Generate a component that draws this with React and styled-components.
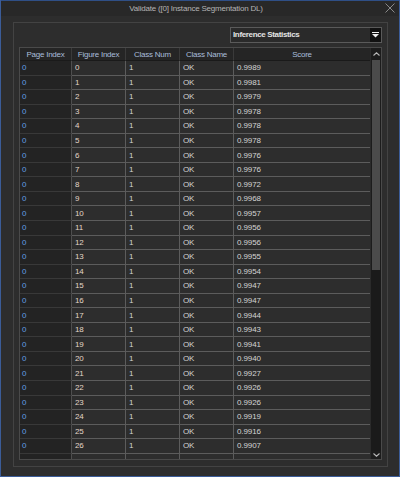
import React from 'react'
import styled, { createGlobalStyle } from 'styled-components'

const GlobalStyle = createGlobalStyle`
  html, body {
    margin: 0;
    padding: 0;
    background: #2d2d2d;
  }
  * { box-sizing: border-box; }
`

const scores = [
  '0.9989', '0.9981', '0.9979', '0.9978', '0.9978', '0.9978', '0.9976', '0.9976',
  '0.9972', '0.9968', '0.9957', '0.9956', '0.9956', '0.9955', '0.9954', '0.9947',
  '0.9947', '0.9944', '0.9943', '0.9941', '0.9940', '0.9927', '0.9926', '0.9926',
  '0.9919', '0.9916', '0.9907',
]

const App = () => {
  return (
    <Window>
      <GlobalStyle />
      <TitleBar>
        <Title>Validate ([0] Instance Segmentation DL)</Title>
        <Close>
          <svg width="10" height="10" viewBox="0 0 10 10">
            <path d="M0.5 0.5 L9.5 9.5 M9.5 0.5 L0.5 9.5" stroke="#8a8a8a" strokeWidth="1" />
          </svg>
        </Close>
      </TitleBar>
      <Body>
        <Frame>
          <Toolbar>
            <Select>
              <SelectText>Inference Statistics</SelectText>
              <SelectButton>
                <svg width="7" height="6" viewBox="0 0 7 6">
                  <rect x="0" y="0" width="7" height="1" fill="#f0f0f0" />
                  <path d="M0 2 L7 2 L3.5 5.5 Z" fill="#f0f0f0" />
                </svg>
              </SelectButton>
            </Select>
          </Toolbar>
          <TableBox>
            <Grid>
              <HeadCell>Page Index</HeadCell>
              <HeadCell>Figure Index</HeadCell>
              <HeadCell>Class Num</HeadCell>
              <HeadCell>Class Name</HeadCell>
              <HeadCell $last>Score</HeadCell>
              {scores.map((s, i) => (
                <React.Fragment key={i}>
                  <RowHead>0</RowHead>
                  <Cell $figure>{i}</Cell>
                  <Cell>1</Cell>
                  <Cell>OK</Cell>
                  <Cell $last>{s}</Cell>
                </React.Fragment>
              ))}
              <RowHead />
              <Cell />
              <Cell />
              <Cell />
              <Cell $last />
            </Grid>
            <ScrollBar>
              <ScrollArrow>
                <svg width="7" height="4" viewBox="0 0 7 4">
                  <path d="M0.5 3.5 L3.5 0.8 L6.5 3.5" stroke="#b8b8b8" strokeWidth="1.1" fill="none" />
                </svg>
              </ScrollArrow>
              <Thumb />
              <Track />
              <ScrollArrow $down>
                <svg width="7" height="4" viewBox="0 0 7 4">
                  <path d="M0.5 0.5 L3.5 3.2 L6.5 0.5" stroke="#b8b8b8" strokeWidth="1.1" fill="none" />
                </svg>
              </ScrollArrow>
            </ScrollBar>
          </TableBox>
        </Frame>
      </Body>
    </Window>
  )
}

const Window = styled.div`
  width: 400px;
  height: 477px;
  display: flex;
  flex-direction: column;
  background: #2d2d2d;
  border: 1px solid #3b5c98;
  border-top: none;
  font-family: "Liberation Sans", Arial, sans-serif;
  font-size: 8px;
  letter-spacing: -0.1px;
  color: #d6d6d6;
  overflow: hidden;
`

const TitleBar = styled.div`
  height: 16px;
  flex: none;
  display: flex;
  align-items: center;
  justify-content: center;
  position: relative;
  background: #282828;
  border-top: 1px solid #2f4f86;
`

const Title = styled.div`
  color: #b4b4b4;
  font-size: 8px;
  letter-spacing: -0.2px;
  margin-right: 8px;
`

const Close = styled.div`
  position: absolute;
  right: 4px;
  top: 2px;
  display: flex;
`

const Body = styled.div`
  flex: 1;
  display: flex;
  padding: 6px 11px 9px 12px;
  min-height: 0;
`

const Frame = styled.div`
  flex: 1;
  display: flex;
  flex-direction: column;
  border: 1px solid #434343;
  padding: 4px 5px 6px 5px;
  min-height: 0;
`

const Toolbar = styled.div`
  display: flex;
  justify-content: flex-end;
  height: 16px;
  margin-bottom: 4px;
`

const Select = styled.div`
  width: 152px;
  height: 16px;
  display: flex;
  border: 1px solid #5a5a5a;
  background: #2a2a2a;
`

const SelectText = styled.div`
  flex: 1;
  font-weight: bold;
  color: #e4e4e4;
  padding-left: 2px;
  line-height: 14px;
  letter-spacing: -0.35px;
`

const SelectButton = styled.div`
  width: 11px;
  background: #121212;
  display: flex;
  align-items: center;
  justify-content: center;
`

const TableBox = styled.div`
  flex: 1;
  display: flex;
  border: 1px solid #4a4a4a;
  min-height: 0;
  overflow: hidden;
`

const Grid = styled.div`
  flex: 1;
  display: grid;
  grid-template-columns: 52px 54px 54px 54px 1fr;
  grid-auto-rows: 14.55px;
  grid-template-rows: 13px;
  align-content: start;
  overflow: hidden;
  background: #2d2d2d;
`

const HeadCell = styled.div`
  background: #252525;
  color: #a9bedb;
  display: flex;
  align-items: center;
  justify-content: center;
  border-right: ${p => (p.$last ? 'none' : '1px solid #3a3a3a')};
  border-bottom: 1px solid #1a1a1a;
  white-space: nowrap;
  letter-spacing: -0.25px;
`

const RowHead = styled.div`
  background: #232323;
  color: #629fe6;
  display: flex;
  align-items: center;
  padding-left: 2px;
  border-bottom: 1px solid #383838;
  border-right: 1px solid #4e4e4e;
`

const Cell = styled.div`
  color: ${p => (p.$figure ? '#e2d6c8' : '#d4d4d4')};
  display: flex;
  align-items: center;
  padding-left: 3px;
  border-bottom: 1px solid #5c5c5c;
  border-right: ${p => (p.$last ? 'none' : '1px solid #5c5c5c')};
`

const ScrollBar = styled.div`
  width: 11px;
  flex: none;
  display: flex;
  flex-direction: column;
  background: #1c1c1c;
  border-left: 1px solid #2a2a2a;
`

const ScrollArrow = styled.div`
  height: ${p => (p.$down ? '8px' : '12px')};
  flex: none;
  display: flex;
  align-items: center;
  justify-content: center;
  background: #1c1c1c;
`

const Thumb = styled.div`
  height: 210px;
  flex: none;
  background: #4b4b4b;
  margin: 0 1px;
`

const Track = styled.div`
  flex: 1;
  background: #1a1a1a;
`

export default App
